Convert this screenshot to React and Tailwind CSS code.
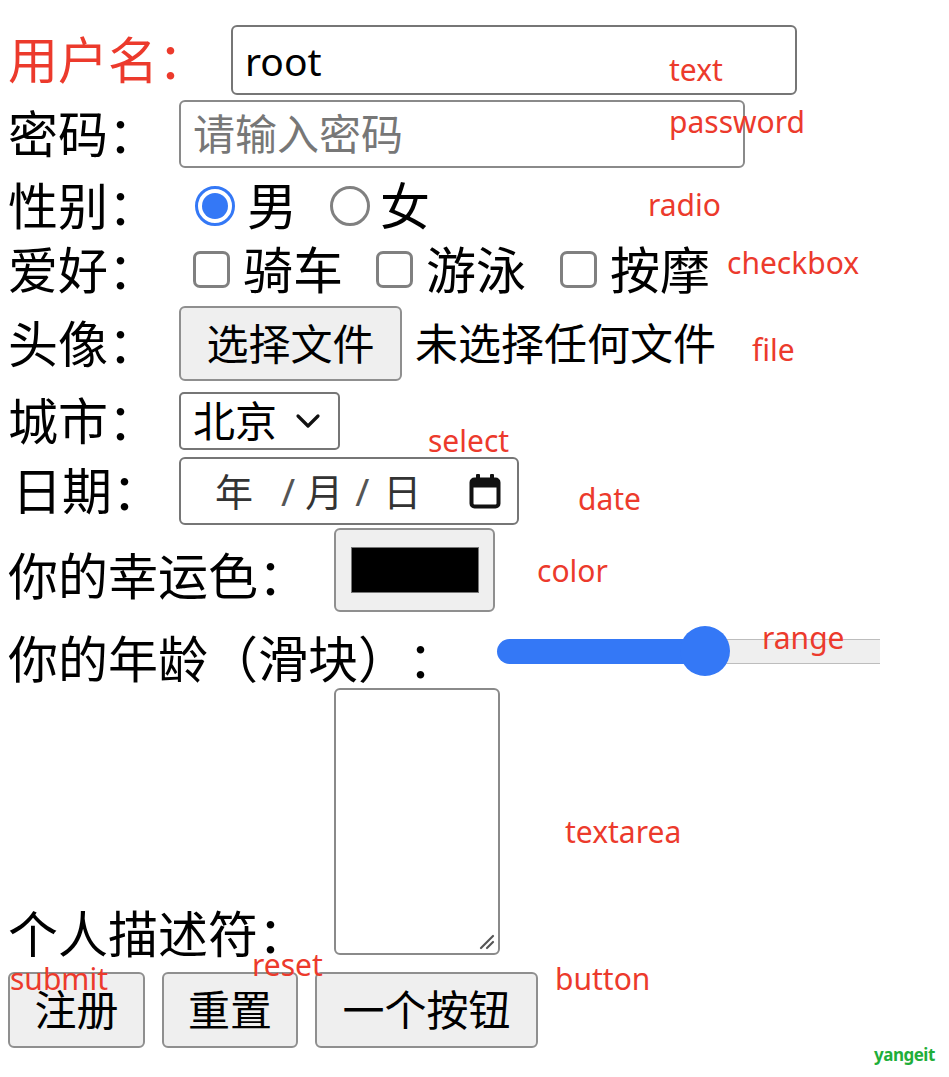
const red = "text-[#ec3a2c]";

function Radio({ checked }) {
  return checked ? (
    <span className="flex h-[40px] w-[40px] items-center justify-center rounded-full border-[3px] border-[#3478f6]">
      <span className="h-[26px] w-[26px] rounded-full bg-[#3478f6]" />
    </span>
  ) : (
    <span className="h-[40px] w-[40px] rounded-full border-[3px] border-[#808080]" />
  );
}

function Checkbox() {
  return <span className="h-[37px] w-[37px] shrink-0 rounded-[7px] border-[3px] border-[#808080]" />;
}

function Button({ children, w }) {
  return (
    <div className={`flex h-[76px] items-center justify-center rounded-[6px] border-2 border-[#8f8f8f] bg-[#efefef] text-[42px] leading-none ${w}`}>
      {children}
    </div>
  );
}

function Note({ children, className }) {
  return (
    <span className={`absolute text-[30px] leading-none font-['Noto_Sans',sans-serif] ${red} ${className}`}>
      {children}
    </span>
  );
}

export default function App() {
  return (
    <div className="relative h-[1077px] w-[949px] overflow-hidden bg-white font-['Noto_Sans','Noto_Sans_CJK_SC',sans-serif] text-black [text-spacing-trim:space-all]">
      <div className="flex flex-col pl-[8px] pt-[25px]">
        {/* 用户名 */}
        <div className="flex h-[70px] items-center">
          <span className={`w-[223px] text-[50px] leading-none ${red}`}>用户名：</span>
          <div className="flex h-[70px] w-[566px] items-center rounded-[6px] border-2 border-[#767676] px-[12px] text-[39px] leading-none">
            root
          </div>
        </div>

        {/* 密码 */}
        <div className="mt-[5px] flex h-[68px] items-center">
          <span className="w-[171px] text-[50px] leading-none">密码：</span>
          <div className="flex h-[68px] w-[566px] items-center rounded-[6px] border-2 border-[#8a8a8a] px-[12px] text-[42px] leading-none text-[#777]">
            请输入密码
          </div>
        </div>

        {/* 性别 */}
        <div className="mt-[7px] flex h-[62px] items-center">
          <span className="w-[187px] text-[50px] leading-none">性别：</span>
          <Radio checked />
          <span className="ml-[12px] text-[50px] leading-none">男</span>
          <span className="ml-[33px]" />
          <Radio />
          <span className="ml-[10px] text-[50px] leading-none">女</span>
        </div>

        {/* 爱好 */}
        <div className="mt-[5px] flex h-[55px] items-center">
          <span className="w-[185px] text-[50px] leading-none">爱好：</span>
          <Checkbox />
          <span className="ml-[13px] w-[133px] text-[50px] leading-none">骑车</span>
          <Checkbox />
          <span className="ml-[13px] w-[134px] text-[50px] leading-none">游泳</span>
          <Checkbox />
          <span className="ml-[13px] text-[50px] leading-none">按摩</span>
        </div>

        {/* 头像 */}
        <div className="mt-[9px] flex h-[75px] items-center">
          <span className="w-[171px] text-[50px] leading-none">头像：</span>
          <div className="flex h-[75px] w-[223px] items-center justify-center rounded-[6px] border-2 border-[#8f8f8f] bg-[#efefef] text-[42px] leading-none">
            选择文件
          </div>
          <span className="ml-[13px] text-[43px] leading-none">未选择任何文件</span>
        </div>

        {/* 城市 */}
        <div className="mt-[11px] flex h-[58px] items-center">
          <span className="w-[171px] text-[50px] leading-none">城市：</span>
          <div className="flex h-[58px] w-[161px] items-center rounded-[5px] border-2 border-[#767676] pl-[12px] text-[42px] leading-none">
            北京
            <svg className="ml-[18px] h-[16px] w-[26px]" viewBox="0 0 26 16" fill="none" stroke="#111" strokeWidth="3.2" strokeLinecap="round" strokeLinejoin="round">
              <polyline points="3,3 13,13 23,3" />
            </svg>
          </div>
        </div>

        {/* 日期 */}
        <div className="mt-[7px] flex h-[68px] items-center">
          <span className="w-[171px] pl-[4px] text-[50px] leading-none">日期：</span>
          <div className="flex h-[68px] w-[340px] items-center rounded-[6px] border-2 border-[#767676] pl-[34px] pr-[16px] text-[38px] leading-none text-[#333]">
            <span>年</span>
            <span className="ml-[28px] text-[#555]">/</span>
            <span className="ml-[10px]">月</span>
            <span className="ml-[12px] text-[#555]">/</span>
            <span className="ml-[14px]">日</span>
            <svg className="ml-auto h-[36px] w-[32px]" viewBox="0 0 32 36" fill="none">
              <rect x="2.5" y="6.5" width="27" height="27" rx="3" stroke="#111" strokeWidth="4" />
              <rect x="2.5" y="6.5" width="27" height="8" fill="#111" />
              <rect x="7" y="1" width="4" height="8" rx="1" fill="#111" />
              <rect x="21" y="1" width="4" height="8" rx="1" fill="#111" />
            </svg>
          </div>
        </div>

        {/* 幸运色 */}
        <div className="mt-[3px] flex h-[84px] items-center">
          <span className="w-[326px] pt-[12px] text-[50px] leading-none">你的幸运色：</span>
          <div className="flex h-[84px] w-[161px] items-center justify-center rounded-[6px] border-2 border-[#8f8f8f] bg-[#efefef]">
            <div className="h-[46px] w-[128px] border border-[#777] bg-black" />
          </div>
        </div>

        {/* 年龄 */}
        <div className="mt-[4px] flex h-[70px] items-center">
          <span className="w-[489px] pt-[16px] text-[50px] leading-none">你的年龄（滑块）：</span>
          <div className="relative flex h-[50px] flex-1 items-center">
            <div className="h-[25px] w-[208px] rounded-l-full bg-[#3478f6]" />
            <div className="h-[25px] flex-1 border-y border-[#bdbdbd] bg-[#efefef]" />
            <div className="absolute left-[183px] top-0 h-[50px] w-[50px] rounded-full bg-[#3478f6]" />
          </div>
          <div className="w-[69px]" />
        </div>

        {/* 个人描述符 */}
        <div className="mt-[2px] flex items-end">
          <span className="mb-[-4px] w-[326px] text-[50px] leading-none">个人描述符：</span>
          <div className="relative h-[267px] w-[166px] rounded-[6px] border-2 border-[#8a8a8a]">
            <svg className="absolute bottom-[3px] right-[3px] h-[18px] w-[18px]" viewBox="0 0 18 18" stroke="#555" strokeWidth="2.2" strokeLinecap="round">
              <line x1="4" y1="16" x2="16" y2="4" />
              <line x1="10" y1="16" x2="16" y2="10" />
            </svg>
          </div>
        </div>

        {/* 按钮 */}
        <div className="mt-[17px] flex gap-[17px]">
          <Button w="w-[137px]">注册</Button>
          <Button w="w-[136px]">重置</Button>
          <Button w="w-[223px]">一个按钮</Button>
        </div>
      </div>

      {/* 标注 */}
      <Note className="left-[669px] top-[55px]">text</Note>
      <Note className="left-[669px] top-[107px]">password</Note>
      <Note className="left-[648px] top-[190px]">radio</Note>
      <Note className="left-[727px] top-[248px]">checkbox</Note>
      <Note className="left-[752px] top-[335px]">file</Note>
      <Note className="left-[428px] top-[426px]">select</Note>
      <Note className="left-[578px] top-[484px]">date</Note>
      <Note className="left-[537px] top-[556px]">color</Note>
      <Note className="left-[762px] top-[623px]">range</Note>
      <Note className="left-[565px] top-[817px]">textarea</Note>
      <Note className="left-[10px] top-[964px]">submit</Note>
      <Note className="left-[252px] top-[950px]">reset</Note>
      <Note className="left-[555px] top-[964px]">button</Note>
      <span className="absolute left-[874px] top-[1046px] text-[17px] font-bold leading-none tracking-[-0.5px] text-[#1fae3a] font-['Noto_Sans',sans-serif]">
        yangeit
      </span>
    </div>
  );
}
